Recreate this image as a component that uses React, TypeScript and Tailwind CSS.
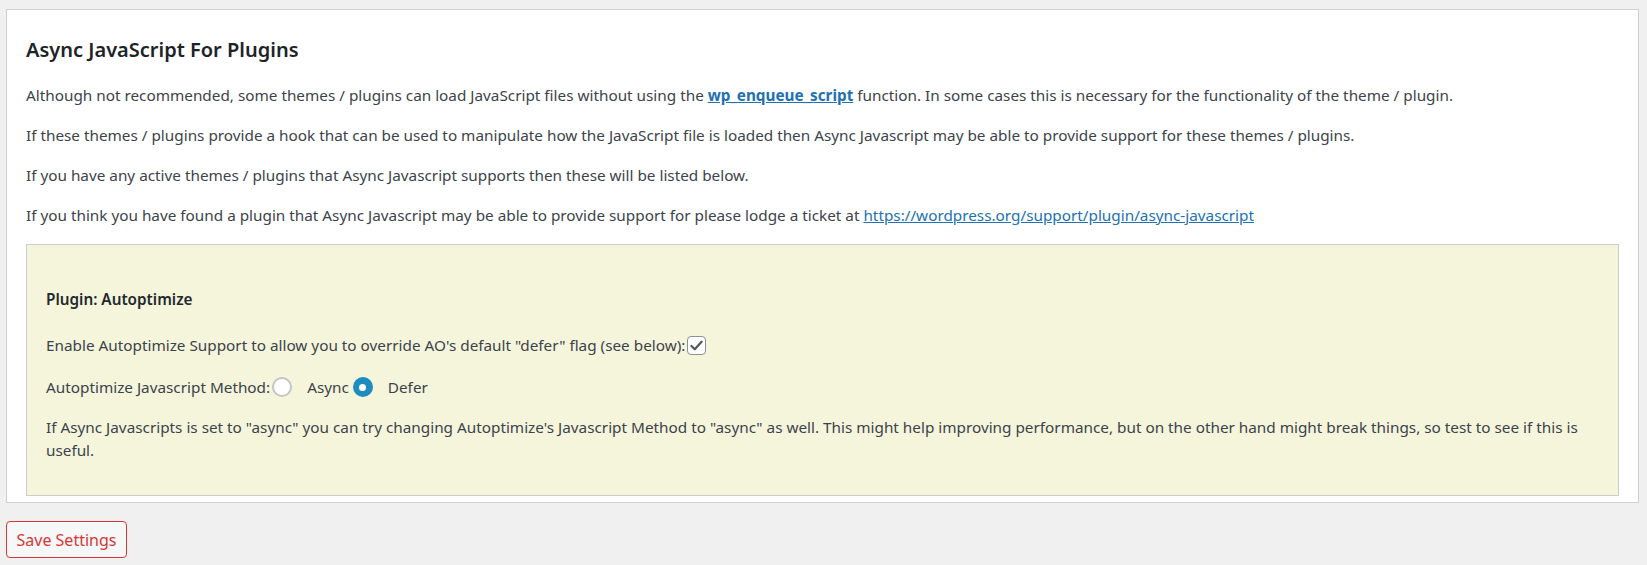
import React, { useState } from 'react';

const font = { fontFamily: '"Noto Sans", "Open Sans", Arial, sans-serif' };

const App: React.FC = () => {
  const [override, setOverride] = useState(true);
  const [method, setMethod] = useState<'async' | 'defer'>('defer');

  return (
    <div
      className="min-h-[565px] bg-[#f0f0f0] pt-[9px] pl-[6px] pr-[8px] text-[15.3px] text-[#3c434a]"
      style={font}
    >
      <div className="border border-[#ccd0d4] bg-white pl-[19px] pr-[19px] pb-[6px]">
        <h2 className="mt-[26px] text-[20px] leading-[27px] font-semibold text-[#1d2327]">
          Async JavaScript For Plugins
        </h2>
        <p className="mt-[20px] leading-[24px]">
          Although not recommended, some themes / plugins can load JavaScript files without using the{' '}
          <a href="#" className="font-bold text-[#2271b1] underline">wp_enqueue_script</a> function. In some cases
          this is necessary for the functionality of the theme / plugin.
        </p>
        <p className="mt-[16px] leading-[24px]">
          If these themes / plugins provide a hook that can be used to manipulate how the JavaScript file is loaded
          then Async Javascript may be able to provide support for these themes / plugins.
        </p>
        <p className="mt-[16px] leading-[24px]">
          If you have any active themes / plugins that Async Javascript supports then these will be listed below.
        </p>
        <p className="mt-[16px] leading-[24px]">
          If you think you have found a plugin that Async Javascript may be able to provide support for please lodge a
          ticket at{' '}
          <a href="#" className="text-[#2271b1] underline">https://wordpress.org/support/plugin/async-javascript</a>
        </p>

        <div className="mt-[17px] border border-[#ccc] bg-[#f5f5dc] pl-[19px] pr-[20px] pt-[42px] pb-[33px]">
          <h3 className="text-[15.3px] leading-[24px] font-semibold text-[#23282d]">Plugin: Autoptimize</h3>

          <div className="mt-[22px] flex items-center leading-[24px]">
            <span>Enable Autoptimize Support to allow you to override AO's default "defer" flag (see below):</span>
            <button
              type="button"
              onClick={() => setOverride(!override)}
              className="ml-[2px] flex h-[19px] w-[19px] items-center justify-center rounded-[4px] border border-[#8c8f94] bg-white"
            >
              {override && (
                <svg viewBox="0 0 20 20" className="h-[17px] w-[17px]">
                  <path d="M4 10.5l4 4 8-9" fill="none" stroke="#50575e" strokeWidth="2.6" strokeLinecap="round" strokeLinejoin="round" />
                </svg>
              )}
            </button>
          </div>

          <div className="mt-[18px] flex items-center leading-[24px]">
            <span>Autoptimize Javascript Method:</span>
            <button
              type="button"
              onClick={() => setMethod('async')}
              className={
                method === 'async'
                  ? 'ml-[2px] flex h-[20px] w-[20px] items-center justify-center rounded-full bg-[#1e8cbe]'
                  : 'ml-[2px] flex h-[20px] w-[20px] items-center justify-center rounded-full border-2 border-[#c3c4c7] bg-white'
              }
            >
              {method === 'async' && <span className="h-[7px] w-[7px] rounded-full bg-white" />}
            </button>
            <span className="ml-[15px]">Async</span>
            <button
              type="button"
              onClick={() => setMethod('defer')}
              className={
                method === 'defer'
                  ? 'ml-[4px] flex h-[20px] w-[20px] items-center justify-center rounded-full bg-[#1e8cbe]'
                  : 'ml-[4px] flex h-[20px] w-[20px] items-center justify-center rounded-full border-2 border-[#c3c4c7] bg-white'
              }
            >
              {method === 'defer' && <span className="h-[7px] w-[7px] rounded-full bg-white" />}
            </button>
            <span className="ml-[15px]">Defer</span>
          </div>

          <p className="mt-[17px] leading-[23px]">
            If Async Javascripts is set to "async" you can try changing Autoptimize's Javascript Method to "async" as
            well. This might help improving performance, but on the other hand might break things, so test to see if
            this is useful.
          </p>
        </div>
      </div>

      <button
        type="button"
        className="mt-[18px] h-[37px] w-[121px] rounded-[4px] border border-[#d63638] bg-[#f6f7f7] text-[16px] text-[#d63638]"
      >
        Save Settings
      </button>
    </div>
  );
};

export default App;
